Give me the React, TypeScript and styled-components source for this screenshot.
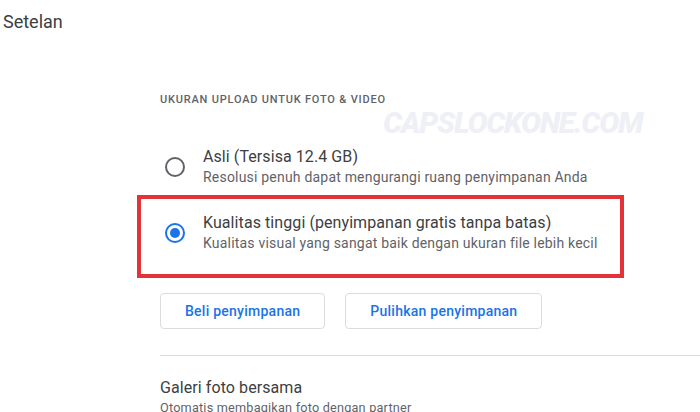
import React from 'react';
import styled, { createGlobalStyle } from 'styled-components';

const GlobalStyle = createGlobalStyle`
    html, body {
        margin: 0;
        padding: 0;
        background: #fff;
        font-family: Roboto, "Liberation Sans", Arial, sans-serif;
        overflow: hidden;
    }
`;

type OptionData = {
    title: string;
    description: string;
    checked?: boolean;
    highlighted?: boolean;
};

const options: OptionData[] = [
    {
        title: 'Asli (Tersisa 12.4 GB)',
        description: 'Resolusi penuh dapat mengurangi ruang penyimpanan Anda',
    },
    {
        title: 'Kualitas tinggi (penyimpanan gratis tanpa batas)',
        description: 'Kualitas visual yang sangat baik dengan ukuran file lebih kecil',
        checked: true,
        highlighted: true,
    },
];

const App = () => {
    return (
        <Page>
            <GlobalStyle />
            <PageTitle>Setelan</PageTitle>
            <Content>
                <SectionHeader>Ukuran upload untuk foto &amp; video</SectionHeader>
                <Watermark>CAPSLOCKONE.COM</Watermark>
                <OptionList>
                    {options.map((opt) => (
                        <Option key={opt.title} $highlighted={opt.highlighted}>
                            <Radio $checked={opt.checked} />
                            <OptionText>
                                <OptionTitle>{opt.title}</OptionTitle>
                                <OptionDesc>{opt.description}</OptionDesc>
                            </OptionText>
                        </Option>
                    ))}
                </OptionList>
                <ButtonRow>
                    <OutlineButton>Beli penyimpanan</OutlineButton>
                    <OutlineButton>Pulihkan penyimpanan</OutlineButton>
                </ButtonRow>
                <Divider />
                <Setting>
                    <OptionTitle>Galeri foto bersama</OptionTitle>
                    <OptionDesc $small>Otomatis membagikan foto dengan partner</OptionDesc>
                </Setting>
            </Content>
        </Page>
    );
};

const Page = styled.main`
    width: 700px;
    height: 412px;
    overflow: hidden;
    padding-top: 10px;
    box-sizing: border-box;
`;

const PageTitle = styled.h1`
    margin: 0 0 0 3px;
    font-size: 18px;
    line-height: 24px;
    font-weight: 400;
    color: #3c4043;
`;

const Content = styled.section`
    position: relative;
    margin: 58px 0 0 160px;
`;

const SectionHeader = styled.h2`
    margin: 0;
    font-size: 11px;
    line-height: 16px;
    font-weight: 500;
    letter-spacing: 0.8px;
    text-transform: uppercase;
    color: #5f6368;
`;

const Watermark = styled.div`
    position: absolute;
    left: 223px;
    top: 13px;
    font-size: 30px;
    font-weight: 900;
    font-style: italic;
    letter-spacing: -1.3px;
    color: #eff0f6;
    pointer-events: none;
`;

const OptionList = styled.div`
    margin-top: 26px;
    display: flex;
    flex-direction: column;
`;

const Option = styled.label<{ $highlighted?: boolean }>`
    position: relative;
    display: flex;
    align-items: center;
    padding: 13px 0;
    cursor: pointer;

    ${({ $highlighted }) =>
        $highlighted &&
        `
        &::after {
            content: '';
            position: absolute;
            left: -23px;
            top: -5px;
            bottom: -12px;
            width: 487px;
            box-sizing: border-box;
            border: 4px solid #e53238;
            pointer-events: none;
        }
    `}
`;

const Radio = styled.span<{ $checked?: boolean }>`
    flex: none;
    width: 20px;
    height: 20px;
    margin: 0 18px 0 5px;
    border-radius: 50%;
    box-sizing: border-box;
    border: 2px solid ${({ $checked }) => ($checked ? '#1a73e8' : '#5f6368')};
    display: flex;
    align-items: center;
    justify-content: center;

    &::before {
        content: '';
        width: 10px;
        height: 10px;
        border-radius: 50%;
        background: ${({ $checked }) => ($checked ? '#1a73e8' : 'transparent')};
    }
`;

const OptionText = styled.div`
    display: flex;
    flex-direction: column;
`;

const OptionTitle = styled.div`
    font-size: 16px;
    line-height: 20px;
    letter-spacing: 0.08px;
    color: #3c4043;
`;

const OptionDesc = styled.div<{ $small?: boolean }>`
    font-size: ${({ $small }) => ($small ? '12.7px' : '14px')};
    line-height: 20px;
    letter-spacing: 0.2px;
    color: #5f6368;
`;

const ButtonRow = styled.div`
    display: flex;
    gap: 20px;
    margin-top: 27px;
`;

const OutlineButton = styled.button`
    height: 36px;
    padding: 0 24px;
    border: 1px solid #dadce0;
    border-radius: 4px;
    background: #fff;
    font-family: Roboto, "Liberation Sans", Arial, sans-serif;
    font-size: 14px;
    font-weight: 500;
    letter-spacing: 0.25px;
    color: #1a73e8;
    cursor: pointer;
`;

const Divider = styled.hr`
    margin: 26px 0 0;
    border: none;
    border-top: 1px solid #dadce0;
`;

const Setting = styled.div`
    padding-top: 22px;
`;

export default App;
